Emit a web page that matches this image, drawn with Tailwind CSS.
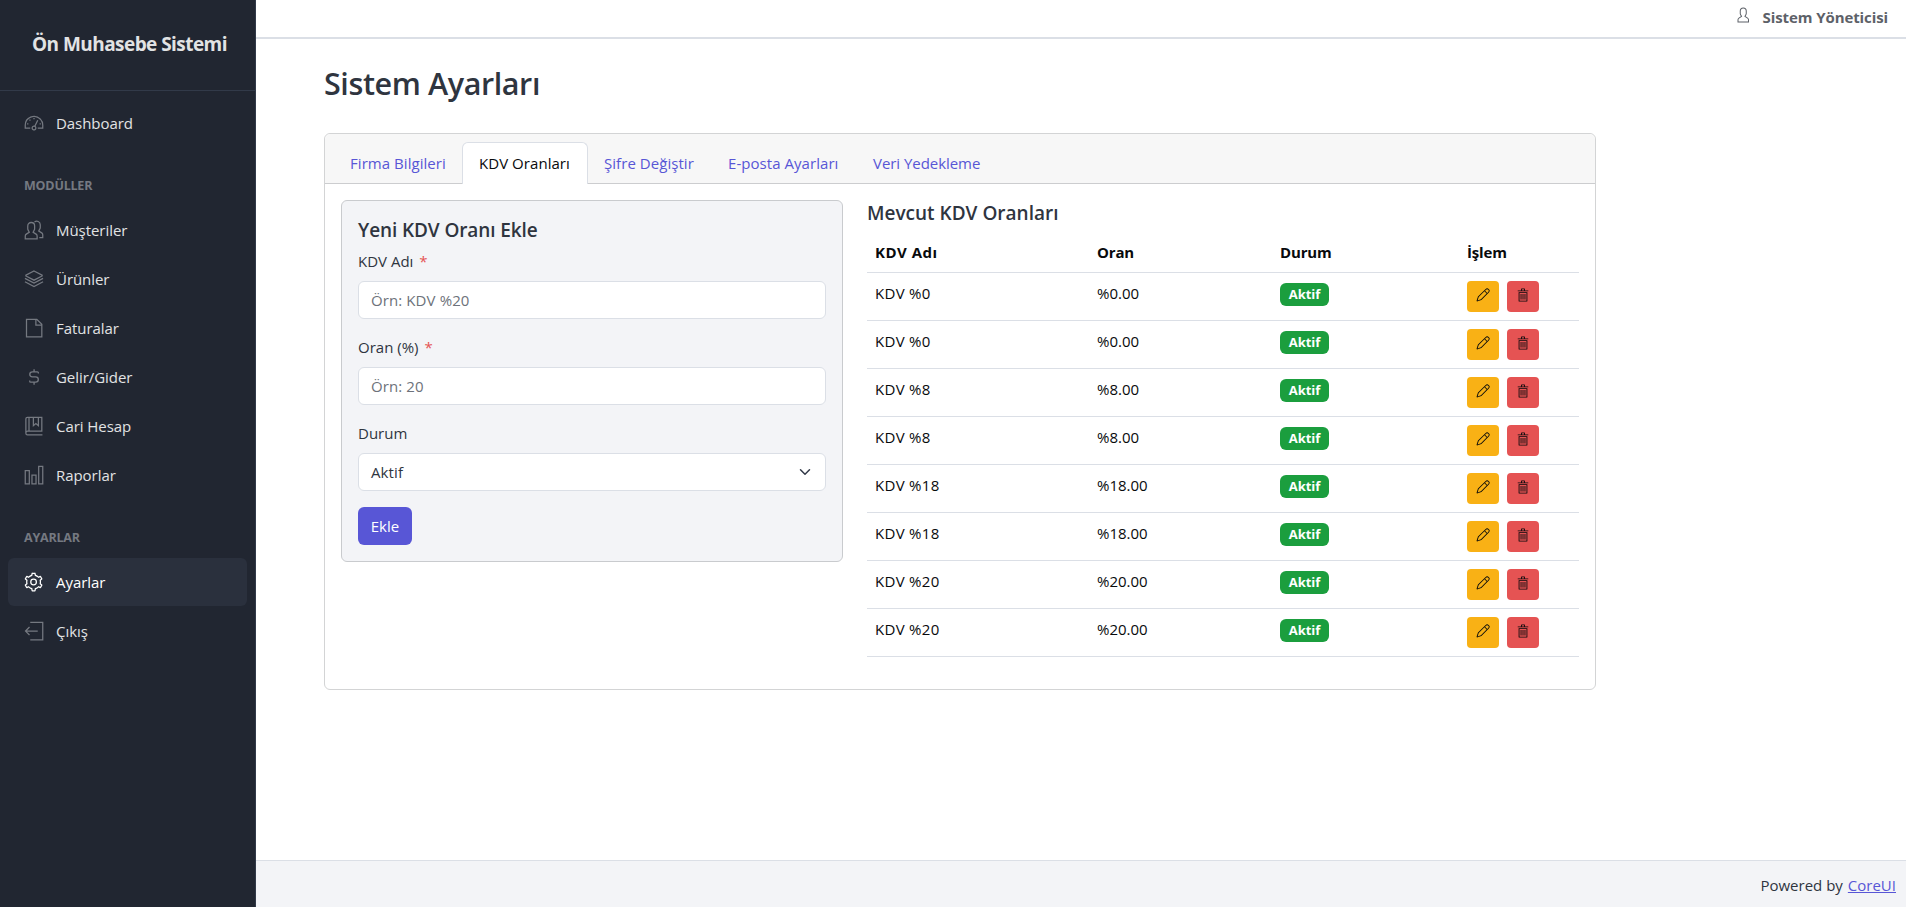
<!DOCTYPE html>
<html lang="tr">
<head>
    <meta charset="UTF-8">
    <meta name="viewport" content="width=device-width, initial-scale=1.0">
    <title>Sistem Ayarları - Ön Muhasebe Sistemi</title>
    <script src="https://cdn.jsdelivr.net/npm/@tailwindcss/browser@4"></script>
</head>
<body class="flex h-screen overflow-hidden bg-white font-['Open_Sans','Noto_Sans',sans-serif] text-[15px] leading-6 text-[#2f353f]">

    <!-- Icon sprite -->
    <svg class="hidden" xmlns="http://www.w3.org/2000/svg">
        <symbol id="speedometer" viewBox="0 0 512 512">
            <path d="M425.706,142.294A240,240,0,0,0,16,312v88H160V368H48V312c0-114.691,93.309-208,208-208s208,93.309,208,208v56H352v32H496V312A238.432,238.432,0,0,0,425.706,142.294Z"/>
            <path d="M80 264h32v32H80zM240 128h32v32h-32zM136 168h32v32h-32zM400 264h32v32h-32z"/>
            <path d="M297.222,335.1l69.2-144.173-28.85-13.848L268.389,321.214A64.141,64.141,0,1,0,297.222,335.1ZM256,416a32,32,0,1,1,32-32A32.036,32.036,0,0,1,256,416Z"/>
        </symbol>
        <symbol id="people" viewBox="0 0 512 512">
            <path d="M462.541,316.3l-64.344-42.1,24.774-45.418A79.124,79.124,0,0,0,432.093,192V120A103.941,103.941,0,0,0,257.484,43.523L279.232,67a71.989,71.989,0,0,1,120.861,53v72a46.809,46.809,0,0,1-5.215,21.452L355.962,284.8l89.058,58.274a42.16,42.16,0,0,1,19.073,35.421V432h-72v32h104V378.494A74.061,74.061,0,0,0,462.541,316.3Z"/>
            <path d="M318.541,348.3l-64.343-42.1,24.773-45.418A79.124,79.124,0,0,0,288.093,224V152A104.212,104.212,0,0,0,184.04,47.866C126.723,47.866,80.093,94.581,80.093,152v72a78,78,0,0,0,9.015,36.775l24.908,45.664L50.047,348.3A74.022,74.022,0,0,0,16.5,410.4L16,496H352.093V410.494A74.061,74.061,0,0,0,318.541,348.3ZM320.093,464H48.186l.31-53.506a42.158,42.158,0,0,1,19.073-35.421l88.682-58.029L117.2,245.452A46.838,46.838,0,0,1,112.093,224V152a72,72,0,1,1,144,0v72a46.809,46.809,0,0,1-5.215,21.452L211.962,316.8l89.058,58.274a42.16,42.16,0,0,1,19.073,35.421Z"/>
        </symbol>
        <symbol id="layers" viewBox="0 0 512 512">
            <g fill="none" stroke="currentColor" stroke-width="32">
                <path d="M256 50L464 158v20L256 286L48 178v-20Z"/>
                <path d="M24 241L256 362L488 241M24 327L256 448L488 327"/>
            </g>
        </symbol>
        <symbol id="file" viewBox="0 0 512 512">
            <path d="M334.627,16H48V496H472V153.373ZM440,166.627V168H320V48h1.373ZM80,464V48H288V200H440V464Z"/>
        </symbol>
        <symbol id="dollar" viewBox="0 0 512 512">
            <path fill="none" stroke="currentColor" stroke-width="34" d="M258 56v64M258 392v64M368 168v-18q0-26-26-26H216q-68 0-68 64t68 64h80q70 0 70 68t-70 68H170q-24 0-24-26v-18"/>
        </symbol>
        <symbol id="book" viewBox="0 0 512 512">
            <g fill="none" stroke="currentColor" stroke-width="32">
                <path d="M472 32H88Q48 32 48 72V440Q48 480 88 480H472M472 384H88Q48 384 48 432M128 32V384M456 32V400"/>
                <path d="M240 32V248L304 192L368 248V32"/>
            </g>
        </symbol>
        <symbol id="chart" viewBox="0 0 512 512">
            <path fill="none" stroke="currentColor" stroke-width="32" d="M32 144H136V480H32ZM204 256H308V480H204ZM376 32H480V480H376Z"/>
        </symbol>
        <symbol id="settings" viewBox="0 0 512 512">
            <path d="M245.151,168a88,88,0,1,0,88,88A88.1,88.1,0,0,0,245.151,168Zm0,144a56,56,0,1,1,56-56A56.063,56.063,0,0,1,245.151,312Z"/>
            <path d="M464.7,322.319l-31.77-26.153a193.081,193.081,0,0,0,0-80.332l31.77-26.153a19.941,19.941,0,0,0,4.606-25.439l-32.612-56.483a19.936,19.936,0,0,0-24.337-8.73l-38.561,14.447a192.038,192.038,0,0,0-69.54-40.192L297.49,32.713A19.936,19.936,0,0,0,277.762,16H212.54a19.937,19.937,0,0,0-19.728,16.712L186.05,73.284a192.03,192.03,0,0,0-69.54,40.192L77.945,99.027a19.937,19.937,0,0,0-24.334,8.731L21,164.245a19.94,19.94,0,0,0,4.61,25.438l31.767,26.151a193.081,193.081,0,0,0,0,80.332l-31.77,26.153A19.942,19.942,0,0,0,21,347.758l32.612,56.483a19.937,19.937,0,0,0,24.337,8.73l38.562-14.447a192.03,192.03,0,0,0,69.54,40.192l6.762,40.571A19.937,19.937,0,0,0,212.54,496h65.222a19.936,19.936,0,0,0,19.728-16.712l6.763-40.572a192.038,192.038,0,0,0,69.54-40.192l38.564,14.449a19.938,19.938,0,0,0,24.334-8.731L469.3,347.755A19.939,19.939,0,0,0,464.7,322.319Zm-50.636,57.12-48.109-18.024-7.285,7.334a159.955,159.955,0,0,1-72.625,41.973l-10,2.636L267.6,464h-44.89l-8.442-50.642-10-2.636a159.955,159.955,0,0,1-72.625-41.973l-7.285-7.334L76.241,379.439,53.8,340.562l39.629-32.624-2.7-9.973a160.9,160.9,0,0,1,0-83.93l2.7-9.972L53.8,171.439l22.446-38.878,48.109,18.024,7.285-7.334a159.955,159.955,0,0,1,72.625-41.973l10-2.636L222.706,48H267.6l8.442,50.642,10,2.636a159.955,159.955,0,0,1,72.625,41.973l7.285,7.334,48.109-18.024,22.447,38.877-39.629,32.625,2.7,9.972a160.9,160.9,0,0,1,0,83.93l-2.7,9.973,39.629,32.623Z"/>
        </symbol>
        <symbol id="logout" viewBox="0 0 512 512">
            <path d="M77.155,272.034H351.75v-32H77.155l75.053-75.053L129.58,142.353,15.9,256.034,129.58,369.716l22.628-22.627Z"/>
            <path d="M160 16V48H464V464H160V496H496V16Z"/>
        </symbol>
        <symbol id="user" viewBox="0 0 512 512">
            <path d="M411.6,343.656l-72.823-47.334,27.455-50.334A80.23,80.23,0,0,0,376,207.681V128a112,112,0,0,0-224,0v79.681a80.236,80.236,0,0,0,9.768,38.308l27.455,50.333L116.4,343.656A79.725,79.725,0,0,0,80,410.732V496H448V410.732A79.727,79.727,0,0,0,411.6,343.656ZM416,464H112V410.732a47.836,47.836,0,0,1,21.841-40.246l97.66-63.479-41.64-76.341A48.146,48.146,0,0,1,184,207.681V128a80,80,0,0,1,160,0v79.681a48.146,48.146,0,0,1-5.861,22.985L296.5,307.007l97.662,63.479h0A47.836,47.836,0,0,1,416,410.732Z"/>
        </symbol>
        <symbol id="pencil" viewBox="0 0 512 512">
            <path d="M29.663,482.25l.087.087a24.847,24.847,0,0,0,17.612,7.342,25.178,25.178,0,0,0,8.1-1.345l142.006-48.172,272.5-272.5A88.832,88.832,0,0,0,344.334,42.039l-272.5,272.5L23.666,456.541A24.844,24.844,0,0,0,29.663,482.25Zm337.3-417.584a56.832,56.832,0,0,1,80.371,80.373L411.5,180.873,331.127,100.5ZM99.744,331.884,308.5,123.127,388.873,203.5,180.116,412.256,58.482,453.518Z"/>
        </symbol>
        <symbol id="trash" viewBox="0 0 512 512">
            <path d="M96,472a23.82,23.82,0,0,0,23.579,24H392.421A23.82,23.82,0,0,0,416,472V152H96Zm32-288H384V464H128Z"/>
            <path d="M168 216h32v200h-32zM240 216h32v200h-32zM312 216h32v200h-32z"/>
            <path d="M328,88V40c0-13.458-9.488-24-21.6-24H205.6C193.488,16,184,26.542,184,40V88H64v32H448V88ZM216,48h80V88H216Z"/>
        </symbol>
    </svg>

    <!-- Sidebar -->
    <aside class="flex w-64 shrink-0 flex-col border-r border-[#323a49] bg-[#212631] text-[#e2e3e4]">
        <div class="flex h-[91px] items-start border-b border-[#323a49] pt-8 pl-8">
            <span class="text-[19px] leading-6 font-bold tracking-[-0.55px] whitespace-nowrap">Ön Muhasebe Sistemi</span>
        </div>
        <nav class="flex flex-col gap-px p-2 text-[15px] tracking-[-0.05px] [&_a]:flex [&_a]:h-12 [&_a]:items-center [&_a]:gap-3 [&_a]:rounded-md [&_a]:px-4 [&_svg]:size-5 [&_svg]:fill-current [&_svg]:text-[#757981]">
            <a href="#"><svg><use href="#speedometer"/></svg>Dashboard</a>
            <div class="flex h-[57px] items-center px-4 pt-[18px] text-[12.5px] font-bold tracking-[-0.2px] text-[#757981]">MODÜLLER</div>
            <a href="#"><svg><use href="#people"/></svg>Müşteriler</a>
            <a href="#"><svg><use href="#layers"/></svg>Ürünler</a>
            <a href="#"><svg><use href="#file"/></svg>Faturalar</a>
            <a href="#"><svg><use href="#dollar"/></svg>Gelir/Gider</a>
            <a href="#"><svg><use href="#book"/></svg>Cari Hesap</a>
            <a href="#"><svg><use href="#chart"/></svg>Raporlar</a>
            <div class="flex h-[57px] items-center px-4 pt-[18px] text-[12.5px] font-bold tracking-[-0.2px] text-[#757981]">AYARLAR</div>
            <a href="#" class="bg-[#2a303d] text-white"><svg class="text-white!"><use href="#settings"/></svg>Ayarlar</a>
            <a href="#"><svg><use href="#logout"/></svg>Çıkış</a>
        </nav>
    </aside>

    <div class="flex min-w-0 flex-1 flex-col">
        <!-- Header -->
        <header class="flex h-[39px] shrink-0 items-center justify-end gap-3 border-b-2 border-[#dbdfe6] pr-[18px] pb-1 text-[#5d6168]">
            <svg class="-mt-1 size-4 fill-current"><use href="#user"/></svg>
            <span class="font-bold tracking-[-0.1px]">Sistem Yöneticisi</span>
        </header>

        <main class="flex-1 pt-[25px] pl-[68px]">
            <h1 class="mb-[31px] text-[30.5px] leading-[38px] font-semibold tracking-[-0.4px]">Sistem Ayarları</h1>

            <div class="w-[1272px] rounded-md border border-[#d3d4d5]">
                <!-- Tabs -->
                <div class="flex h-[50px] items-end rounded-t-md border-b border-[#cccdcf] bg-[#f7f7f7] px-2 tracking-[0.05px] whitespace-nowrap text-[#5856d6]">
                    <a href="#" class="h-[41px] w-[129px] px-[17px] pt-[9px]">Firma Bilgileri</a>
                    <a href="#" class="-mb-px h-[42px] w-[126px] rounded-t-md border border-b-0 border-[#dbdfe6] bg-white px-4 pt-2 text-[#080a0c]">KDV Oranları</a>
                    <a href="#" class="h-[41px] w-[124px] px-4 pt-[9px]">Şifre Değiştir</a>
                    <a href="#" class="h-[41px] w-[145px] px-4 pt-[9px]">E-posta Ayarları</a>
                    <a href="#" class="h-[41px] px-4 pt-[9px] tracking-[-0.05px]">Veri Yedekleme</a>
                </div>

                <div class="flex gap-6 p-4">
                    <!-- New rate form -->
                    <form class="h-[362px] w-[502px] shrink-0 rounded-md border border-[#c9cbce] bg-[#f3f4f7] p-4 pt-[17px]">
                        <h5 class="mb-[7px] text-[19px] leading-6 font-semibold tracking-[-0.1px]">Yeni KDV Oranı Ekle</h5>
                        <label class="mb-2 block">KDV Adı <span class="ml-0.5 text-[#e55353]">*</span></label>
                        <input type="text" placeholder="Örn: KDV %20" class="mb-4 block h-[38px] w-full rounded-md border border-[#dbdfe6] bg-white px-3 tracking-[0.1px] placeholder:text-[#6d727a]">
                        <label class="mb-2 block">Oran (%) <span class="ml-0.5 text-[#e55353]">*</span></label>
                        <input type="text" placeholder="Örn: 20" class="mb-4 block h-[38px] w-full rounded-md border border-[#dbdfe6] bg-white px-3 tracking-[0.1px] placeholder:text-[#6d727a]">
                        <label class="mb-2 block">Durum</label>
                        <div class="mb-4 flex h-[38px] items-center justify-between rounded-md border border-[#dbdfe6] bg-white px-3 tracking-[0.1px]">
                            Aktif
                            <svg class="h-3 w-4" viewBox="0 0 16 16" fill="none" stroke="#323a49" stroke-width="2" stroke-linecap="round" stroke-linejoin="round"><path d="m2 5 6 6 6-6"/></svg>
                        </div>
                        <button type="button" class="h-[38px] w-[54px] rounded-md bg-[#5856d6] text-white">Ekle</button>
                    </form>

                    <!-- Current rates -->
                    <div class="w-[712px] pb-4">
                        <h5 class="mb-[7px] pt-px text-[19px] leading-6 font-semibold">Mevcut KDV Oranları</h5>
                        <table class="w-full table-fixed text-left text-[#080a0c] [&_td]:p-2 [&_td]:align-top [&_td:first-child]:tracking-[0.3px] [&_th]:h-10 [&_th]:px-2 [&_th]:py-0 [&_th]:tracking-[-0.15px] [&_tr]:border-b [&_tr]:border-[#dbdfe6] [&_tbody_tr]:h-12 [&_td>div]:flex [&_td>div]:h-[31px] [&_td>div]:gap-2 [&_b]:mt-0.5 [&_b]:inline-block [&_b]:h-[23px] [&_b]:w-[49px] [&_b]:rounded-md [&_b]:bg-[#1b9e3e] [&_b]:text-center [&_b]:text-[13px] [&_b]:leading-[23px] [&_b]:font-bold [&_b]:text-white [&_button]:flex [&_button]:h-[31px] [&_button]:w-8 [&_button]:justify-center [&_button]:rounded [&_button]:pt-[7px] [&_button]:bg-[#f9b115] [&_button+button]:bg-[#e55353] [&_svg]:size-3.5 [&_svg]:fill-current">
                            <thead>
                                <tr><th class="w-[222px] tracking-[0.5px]!">KDV Adı</th><th class="w-[183px]">Oran</th><th class="w-[187px]">Durum</th><th>İşlem</th></tr>
                            </thead>
                            <tbody>
                                <tr>
                                    <td>KDV %0</td><td>%0.00</td><td><div><b>Aktif</b></div></td>
                                    <td><div><button><svg><use href="#pencil"/></svg></button><button><svg><use href="#trash"/></svg></button></div></td>
                                </tr>
                                <tr>
                                    <td>KDV %0</td><td>%0.00</td><td><div><b>Aktif</b></div></td>
                                    <td><div><button><svg><use href="#pencil"/></svg></button><button><svg><use href="#trash"/></svg></button></div></td>
                                </tr>
                                <tr>
                                    <td>KDV %8</td><td>%8.00</td><td><div><b>Aktif</b></div></td>
                                    <td><div><button><svg><use href="#pencil"/></svg></button><button><svg><use href="#trash"/></svg></button></div></td>
                                </tr>
                                <tr>
                                    <td>KDV %8</td><td>%8.00</td><td><div><b>Aktif</b></div></td>
                                    <td><div><button><svg><use href="#pencil"/></svg></button><button><svg><use href="#trash"/></svg></button></div></td>
                                </tr>
                                <tr>
                                    <td>KDV %18</td><td>%18.00</td><td><div><b>Aktif</b></div></td>
                                    <td><div><button><svg><use href="#pencil"/></svg></button><button><svg><use href="#trash"/></svg></button></div></td>
                                </tr>
                                <tr>
                                    <td>KDV %18</td><td>%18.00</td><td><div><b>Aktif</b></div></td>
                                    <td><div><button><svg><use href="#pencil"/></svg></button><button><svg><use href="#trash"/></svg></button></div></td>
                                </tr>
                                <tr>
                                    <td>KDV %20</td><td>%20.00</td><td><div><b>Aktif</b></div></td>
                                    <td><div><button><svg><use href="#pencil"/></svg></button><button><svg><use href="#trash"/></svg></button></div></td>
                                </tr>
                                <tr>
                                    <td>KDV %20</td><td>%20.00</td><td><div><b>Aktif</b></div></td>
                                    <td><div><button><svg><use href="#pencil"/></svg></button><button><svg><use href="#trash"/></svg></button></div></td>
                                </tr>
                            </tbody>
                        </table>
                    </div>
                </div>
            </div>
        </main>

        <footer class="flex h-[47px] shrink-0 items-center justify-end gap-[5px] border-t border-[#dbdfe6] bg-[#f3f4f7] pt-0.5 pr-2.5">
            <span>Powered by</span>
            <a href="#" class="text-[#5856d6] underline">CoreUI</a>
        </footer>
    </div>
</body>
</html>
